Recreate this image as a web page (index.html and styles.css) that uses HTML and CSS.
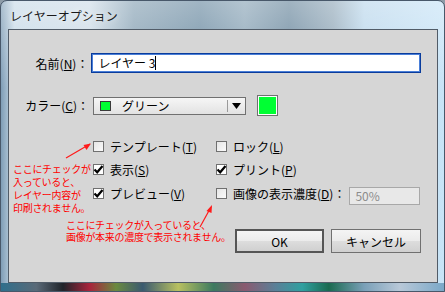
FILE: index.html
```html
<!DOCTYPE html>
<html lang="ja">
<head>
    <meta charset="UTF-8">
    <title>レイヤーオプション</title>
    <link rel="stylesheet" href="styles.css">
</head>
<body>
    <div class="window">
        <div class="titlebar">レイヤーオプション</div>

        <div class="client">
            <div class="form-row name-row">
                <label class="field-label">名前(<u>N</u>)：</label>
                <div class="text-input">レイヤー 3<span class="caret"></span></div>
            </div>

            <div class="form-row color-row">
                <label class="field-label">カラー(<u>C</u>)：</label>
                <div class="select">
                    <span class="chip"></span>
                    <span class="select-text">グリーン</span>
                    <span class="select-arrow">
                        <svg width="9" height="6" viewBox="0 0 9 6"><path d="M0 0 H9 L4.5 6 Z" fill="#000"/></svg>
                    </span>
                </div>
                <div class="swatch"></div>
            </div>

            <div class="checks">
                <div class="check"><span class="box"></span>テンプレート(<u>T</u>)</div>
                <div class="check"><span class="box"></span>ロック(<u>L</u>)</div>
                <div class="check"><span class="box checked"><svg width="11" height="11" viewBox="0 0 11 11"><path d="M1.5 5.5 L4.2 8.3 L9.5 2" fill="none" stroke="#000" stroke-width="2.2"/></svg></span>表示(<u>S</u>)</div>
                <div class="check"><span class="box checked"><svg width="11" height="11" viewBox="0 0 11 11"><path d="M1.5 5.5 L4.2 8.3 L9.5 2" fill="none" stroke="#000" stroke-width="2.2"/></svg></span>プリント(<u>P</u>)</div>
                <div class="check"><span class="box checked"><svg width="11" height="11" viewBox="0 0 11 11"><path d="M1.5 5.5 L4.2 8.3 L9.5 2" fill="none" stroke="#000" stroke-width="2.2"/></svg></span>プレビュー(<u>V</u>)</div>
                <div class="check"><span class="box"></span>画像の表示濃度(<u>D</u>)：<span class="density">50%</span></div>
            </div>

            <div class="buttons">
                <button class="btn btn-default">OK</button>
                <button class="btn">キャンセル</button>
            </div>
        </div>

        <!-- annotations drawn over the dialog -->
        <div class="note note-template">ここにチェックが<br>入っていると、<br>レイヤー内容が<br>印刷されません。</div>
        <div class="note note-density">ここにチェックが入っていると、<br>画像が本来の濃度で表示されません。</div>
        <svg class="arrows" width="445" height="292" viewBox="0 0 445 292">
            <path d="M66 158 L90 144" stroke="#ff1a1a" stroke-width="1.2"/>
            <path d="M91 143.5 L83.5 145 L86.5 150 Z" fill="#ff1a1a"/>
            <path d="M200 227 L211 207" stroke="#ff1a1a" stroke-width="1.2"/>
            <path d="M212 205 L206.5 211 L211.5 213 Z" fill="#ff1a1a"/>
        </svg>
    </div>
</body>
</html>
```

FILE: styles.css
```css
* {
    margin: 0;
    padding: 0;
    box-sizing: border-box;
}

body {
    width: 445px;
    height: 292px;
    background: #8e9ca8;
    font-family: "Noto Sans CJK JP", "Noto Sans", sans-serif;
    font-size: 12px;
    color: #000;
    overflow: hidden;
}

.window {
    position: relative;
    width: 445px;
    height: 292px;
    display: flex;
    flex-direction: column;
    padding: 0 6px 8px 7px;
    border: 1px solid #48586a;
    border-radius: 7px 7px 0 0;
    background:
        linear-gradient(90deg, #2f6f8c 0%, #5a6a78 8%, #20242a 14%, #a8243c 20%, #6a8a40 26%, #3a5a70 32%, #b8c060 40%, #3c7a60 48%, #8a5a70 55%, #5a8098 62%, #30a0a0 68%, #1a6a50 74%, #7aa0b8 82%, #b8c8d8 90%, #7aa8c8 100%) bottom / 100% 8px no-repeat,
        linear-gradient(180deg, rgba(255,255,255,0.35) 0%, rgba(255,255,255,0) 30%),
        linear-gradient(90deg, #7f9db6 0%, #c9dbe8 3%, #cfdde8 20%, #8aa4b6 30%, #6f8ea4 45%, #8ca6b8 55%, #6e8ba0 65%, #95abbb 75%, #bcd8ec 82%, #c8e4f7 100%);
}

.titlebar {
    height: 28px;
    padding: 6px 0 0 2px;
    font-size: 12px;
    color: #1a1a1a;
    text-shadow: 0 0 6px rgba(255,255,255,0.8);
}

.client {
    flex: 1;
    background: #d6d6d6;
    border: 1px solid #515c68;
    padding: 23px 16px 0 0;
}

.form-row {
    display: flex;
    align-items: center;
}

.field-label {
    width: 80px;
    text-align: right;
    white-space: nowrap;
}

.name-row {
    height: 20px;
}

.text-input {
    margin-left: 3px;
    width: 332px;
    height: 20px;
    background: #fff;
    border: 1px solid #0a3c9c;
    box-shadow: inset 0 0 0 1px #4a7fd8;
    padding: 1px 0 0 6px;
    line-height: 16px;
}

.caret {
    display: inline-block;
    width: 1px;
    height: 14px;
    background: #000;
    vertical-align: -2px;
}

.color-row {
    margin-top: 22px;
    height: 21px;
}

.select {
    margin-left: 4px;
    width: 153px;
    height: 18px;
    display: flex;
    align-items: center;
    border: 1px solid #707070;
    background: linear-gradient(#f6f6f6, #e2e2e2);
}

.chip {
    width: 11px;
    height: 10px;
    margin-left: 6px;
    background: #00ff33;
    border: 1px solid #3a3a3a;
}

.select-text {
    margin-left: 11px;
    flex: 1;
}

.select-arrow {
    width: 18px;
    height: 12px;
    border-left: 1px solid #9a9a9a;
    display: flex;
    align-items: center;
    justify-content: center;
}

.swatch {
    margin-left: 11px;
    width: 21px;
    height: 21px;
    background: #00ff33;
    border: 1px solid #707070;
    box-shadow: inset 0 0 0 1px #fff;
}

.checks {
    margin: 18px 0 0 84px;
    display: grid;
    grid-template-columns: 123px 1fr;
    grid-template-rows: 24px 23px 24px;
}

.check {
    display: flex;
    align-items: center;
    white-space: nowrap;
}

.box {
    width: 11px;
    height: 11px;
    margin-right: 6px;
    border: 1px solid #707070;
    background: linear-gradient(135deg, #e6e6e6, #fafafa);
    display: flex;
}

.box.checked {
    background: #fff;
}

.box svg {
    margin: -1px;
}

.density {
    margin-left: 4px;
    margin-top: 5px;
    width: 71px;
    height: 18px;
    border: 1px solid #a8a8a8;
    background: #e8e8e8;
    color: #8c8c8c;
    padding-left: 5px;
    line-height: 16px;
}

.buttons {
    margin-top: 24px;
    display: flex;
    justify-content: flex-end;
    gap: 7px;
}

.btn {
    width: 90px;
    height: 24px;
    font-family: inherit;
    font-size: 12px;
    color: #000;
    border: 1px solid #707070;
    background: linear-gradient(#f4f4f4 0%, #ebebeb 50%, #dddddd 51%, #d0d0d0 100%);
}

.btn-default {
    width: 89px;
    border: 2px solid #555;
}

.note {
    position: absolute;
    color: #ff0000;
    font-size: 10px;
    line-height: 13px;
    letter-spacing: -0.3px;
    white-space: nowrap;
}

.note-template {
    left: 12px;
    top: 161px;
}

.note-density {
    left: 65px;
    top: 218px;
    line-height: 12px;
}

.arrows {
    position: absolute;
    left: -1px;
    top: -1px;
    pointer-events: none;
}
```
